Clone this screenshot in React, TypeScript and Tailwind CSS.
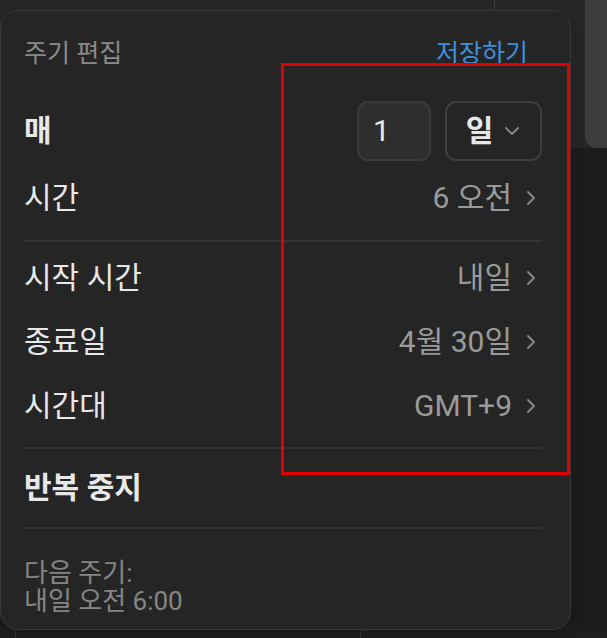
import React from "react"

const font = { fontFamily: 'Roboto, "Noto Sans CJK KR", "Noto Sans", sans-serif' }

function ChevronRight() {
  return (
    <svg width="14" height="20" viewBox="0 0 14 20" fill="none" className="ml-[12px] mr-[4px]">
      <path d="M4 4l6 6-6 6" stroke="#8a8a8a" strokeWidth="1.8" strokeLinecap="round" strokeLinejoin="round" />
    </svg>
  )
}

function ChevronDown() {
  return (
    <svg width="18" height="10" viewBox="0 0 18 10" fill="none" className="ml-[10px]">
      <path d="M3 2l6 6 6-6" stroke="#8a8a8a" strokeWidth="1.8" strokeLinecap="round" strokeLinejoin="round" />
    </svg>
  )
}

function Row({ label, value }: { label: string; value: string }) {
  return (
    <div className="flex h-[64px] items-center justify-between">
      <span className="text-[30px] leading-none text-[#e8e8e8]">{label}</span>
      <span className="flex items-center text-[30px] leading-none text-[#9a9a9a]">
        {value}
        <ChevronRight />
      </span>
    </div>
  )
}

function Sep() {
  return <div className="h-[2px] w-full bg-[#343434]" />
}

export default function App() {
  return (
    <div className="relative h-[638px] w-[607px] overflow-hidden bg-[#1b1b1b]" style={font}>
      {/* background windows */}
      <div className="absolute left-0 top-0 h-[148px] w-full bg-[#252525]" />
      <div className="absolute left-[494px] top-0 h-[11px] w-[1px] bg-[#3a3a3a]" />
      <div className="absolute right-0 top-0 h-[148px] w-[22px] rounded-bl-[12px] bg-[#3c3c3c]" />
      <div className="absolute bottom-0 left-0 h-[12px] w-full bg-[#1e1e1e]">
        <div className="absolute left-[15px] top-0 h-full w-[1px] bg-[#343434]" />
        <div className="absolute left-[360px] top-0 h-full w-[1px] bg-[#343434]" />
      </div>

      {/* card */}
      <div className="relative mt-[10px] flex h-[620px] w-[571px] flex-col rounded-[18px] border border-[#383838] bg-[#252525] pl-[23px] pr-[28px] pt-[22px] shadow-lg">
        <div className="flex h-[40px] items-center justify-between">
          <span className="text-[25px] leading-none text-[#8a8a8a]">주기 편집</span>
          <span className="mr-[14px] text-[25px] leading-none text-[#3d8fdc]">저장하기</span>
        </div>

        <div className="mt-[28px] flex h-[60px] items-center justify-between">
          <span className="text-[30px] font-semibold leading-none text-[#e8e8e8]">매</span>
          <div className="flex items-center gap-[14px]">
            <div className="flex h-[60px] w-[74px] items-center rounded-[11px] border-2 border-[#3a3a3a] bg-[#2e2e2e] pl-[14px] text-[30px] leading-none text-[#e8e8e8]">
              1
            </div>
            <div className="flex h-[60px] w-[97px] items-center justify-center rounded-[11px] border-2 border-[#3e3e3e] text-[30px] font-semibold leading-none text-[#e8e8e8]">
              일
              <ChevronDown />
            </div>
          </div>
        </div>

        <div className="mt-[5px]">
          <Row label="시간" value="6 오전" />
        </div>
        <div className="mt-[10px]">
          <Sep />
        </div>
        <div className="mt-[4px]">
          <Row label="시작 시간" value="내일" />
          <Row label="종료일" value="4월 30일" />
          <Row label="시간대" value="GMT+9" />
        </div>
        <div className="mt-[9px]">
          <Sep />
        </div>
        <div className="flex h-[78px] items-center">
          <span className="text-[30px] font-semibold leading-none text-[#e8e8e8]">반복 중지</span>
        </div>
        <Sep />
        <div className="mt-[30px] text-[26px] leading-[28px] text-[#858585]">
          <div>다음 주기:</div>
          <div>내일 오전 6:00</div>
        </div>
      </div>

      {/* annotation */}
      <div className="absolute left-[281px] top-[63px] h-[412px] w-[289px] border-[3px] border-[#e00000]" />
    </div>
  )
}
